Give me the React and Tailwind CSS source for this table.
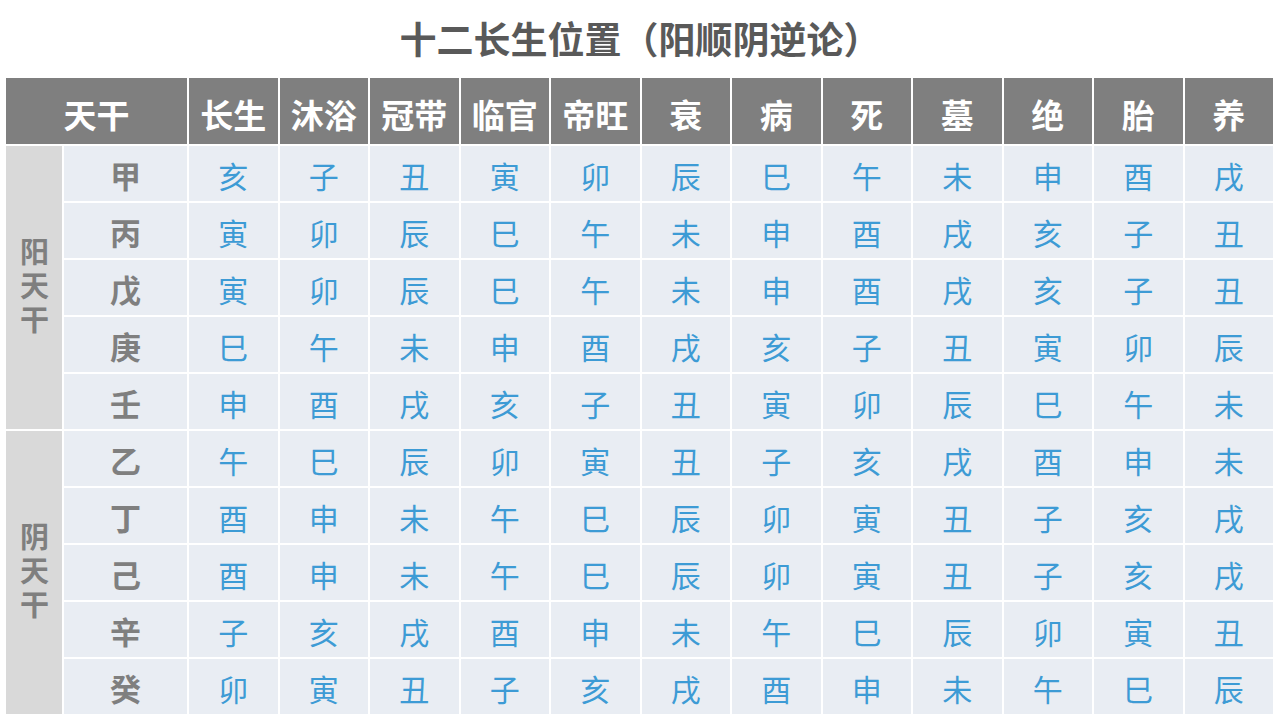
const branches = ["长生", "沐浴", "冠带", "临官", "帝旺", "衰", "病", "死", "墓", "绝", "胎", "养"];

const yangRows = [
  ["甲", "亥子丑寅卯辰巳午未申酉戌"],
  ["丙", "寅卯辰巳午未申酉戌亥子丑"],
  ["戊", "寅卯辰巳午未申酉戌亥子丑"],
  ["庚", "巳午未申酉戌亥子丑寅卯辰"],
  ["壬", "申酉戌亥子丑寅卯辰巳午未"],
];

const yinRows = [
  ["乙", "午巳辰卯寅丑子亥戌酉申未"],
  ["丁", "酉申未午巳辰卯寅丑子亥戌"],
  ["己", "酉申未午巳辰卯寅丑子亥戌"],
  ["辛", "子亥戌酉申未午巳辰卯寅丑"],
  ["癸", "卯寅丑子亥戌酉申未午巳辰"],
];

const font = { fontFamily: '"Noto Sans CJK SC", "Noto Sans", sans-serif' };

function SideLabel({ text, rowClass }) {
  return (
    <div className={`${rowClass} col-start-1 bg-[#d9d9d9] flex items-center justify-center`}>
      <span className="[writing-mode:vertical-rl] tracking-[5px] text-[29px] font-bold leading-none text-[#7f7f7f]">
        {text}
      </span>
    </div>
  );
}

function StemRow({ stem, cells }) {
  return (
    <>
      <div className="col-start-2 bg-[#e9edf3] flex items-center justify-center pt-[3px] text-[31px] font-bold text-[#7f7f7f]">
        {stem}
      </div>
      {cells.split("").map((c, i) => (
        <div
          key={i}
          className="bg-[#e9edf3] flex items-center justify-center pt-[3px] text-[30px] text-[#3d9bd5]"
        >
          {c}
        </div>
      ))}
    </>
  );
}

export default function App() {
  return (
    <div className="w-[1280px] h-[720px] bg-white overflow-hidden" style={font}>
      {/* Título */}
      <div className="h-[78px] flex items-center justify-center text-[37px] font-bold text-[#595959]">
        十二长生位置（阳顺阴逆论）
      </div>

      {/* Tabla */}
      <div className="ml-[6px] w-[1267px] grid grid-cols-[56px_123px_repeat(12,1fr)] grid-rows-[66px_repeat(10,55px)] gap-[2px] bg-white">
        <div className="col-span-2 bg-[#7f7f7f] flex items-center justify-center pt-[8px] text-[33px] font-bold text-white">
          天干
        </div>
        {branches.map((b) => (
          <div
            key={b}
            className="bg-[#7f7f7f] flex items-center justify-center pt-[8px] text-[33px] font-bold text-white"
          >
            {b}
          </div>
        ))}

        <SideLabel text="阳天干" rowClass="row-start-2 row-span-5" />
        {yangRows.map(([s, c]) => (
          <StemRow key={s} stem={s} cells={c} />
        ))}

        <SideLabel text="阴天干" rowClass="row-start-7 row-span-5" />
        {yinRows.map(([s, c]) => (
          <StemRow key={s} stem={s} cells={c} />
        ))}
      </div>
    </div>
  );
}
